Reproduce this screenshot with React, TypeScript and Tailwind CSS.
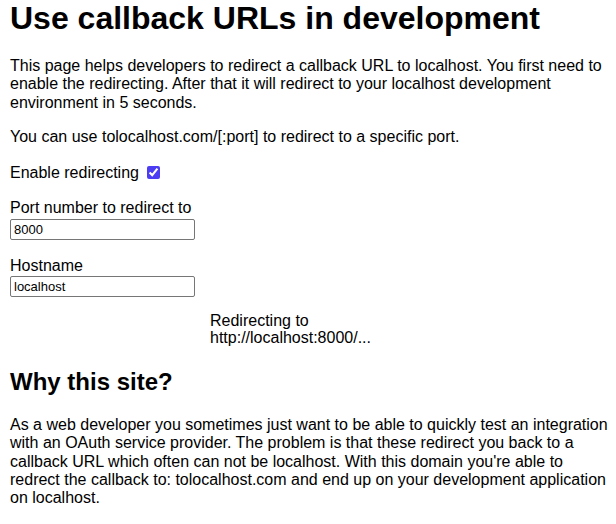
export default function App() {
  return (
    <div className="px-[10px] text-black bg-white font-['Liberation_Sans',Arial,sans-serif] text-base leading-[1.15]">
      <h1 className="text-[32px] font-bold leading-[1.15]">Use callback URLs in development</h1>

      <p className="mt-[20px]">
        This page helps developers to redirect a callback URL to localhost. You first need to enable the
        redirecting. After that it will redirect to your localhost development environment in 5 seconds.
      </p>
      <p className="mt-[16px]">You can use tolocalhost.com/[:port] to redirect to a specific port.</p>

      <div className="mt-[17px] flex items-center">
        <label htmlFor="enable">Enable redirecting</label>
        <input
          id="enable"
          type="checkbox"
          defaultChecked
          className="ml-[8px] my-[3px] w-[13px] h-[13px] accent-[#4c3cf2]"
        />
      </div>

      <div className="mt-[17px]">
        <label htmlFor="port" className="block">Port number to redirect to</label>
        <input
          id="port"
          defaultValue="8000"
          className="block mt-[1px] w-[185px] h-[21px] px-[3px] border border-[#767676] rounded-[2px] text-[13px]"
        />
      </div>

      <div className="mt-[17px]">
        <label htmlFor="host" className="block">Hostname</label>
        <input
          id="host"
          defaultValue="localhost"
          className="block mt-[1px] w-[185px] h-[21px] px-[3px] border border-[#767676] rounded-[2px] text-[13px]"
        />
      </div>

      <div className="mt-[15px] pl-[200px] leading-[17px]">
        <p>Redirecting to</p>
        <p>http://localhost:8000/...</p>
      </div>

      <h2 className="mt-[22px] text-[24px] font-bold leading-[1.15]">Why this site?</h2>
      <p className="mt-[20px] -mr-[4px]">
        As a web developer you sometimes just want to be able to quickly test an integration with an OAuth
        service provider. The problem is that these redirect you back to a callback URL which often can not be
        localhost. With this domain you're able to redrect the callback to: tolocalhost.com and end up on your
        development application on localhost.
      </p>
    </div>
  );
}
